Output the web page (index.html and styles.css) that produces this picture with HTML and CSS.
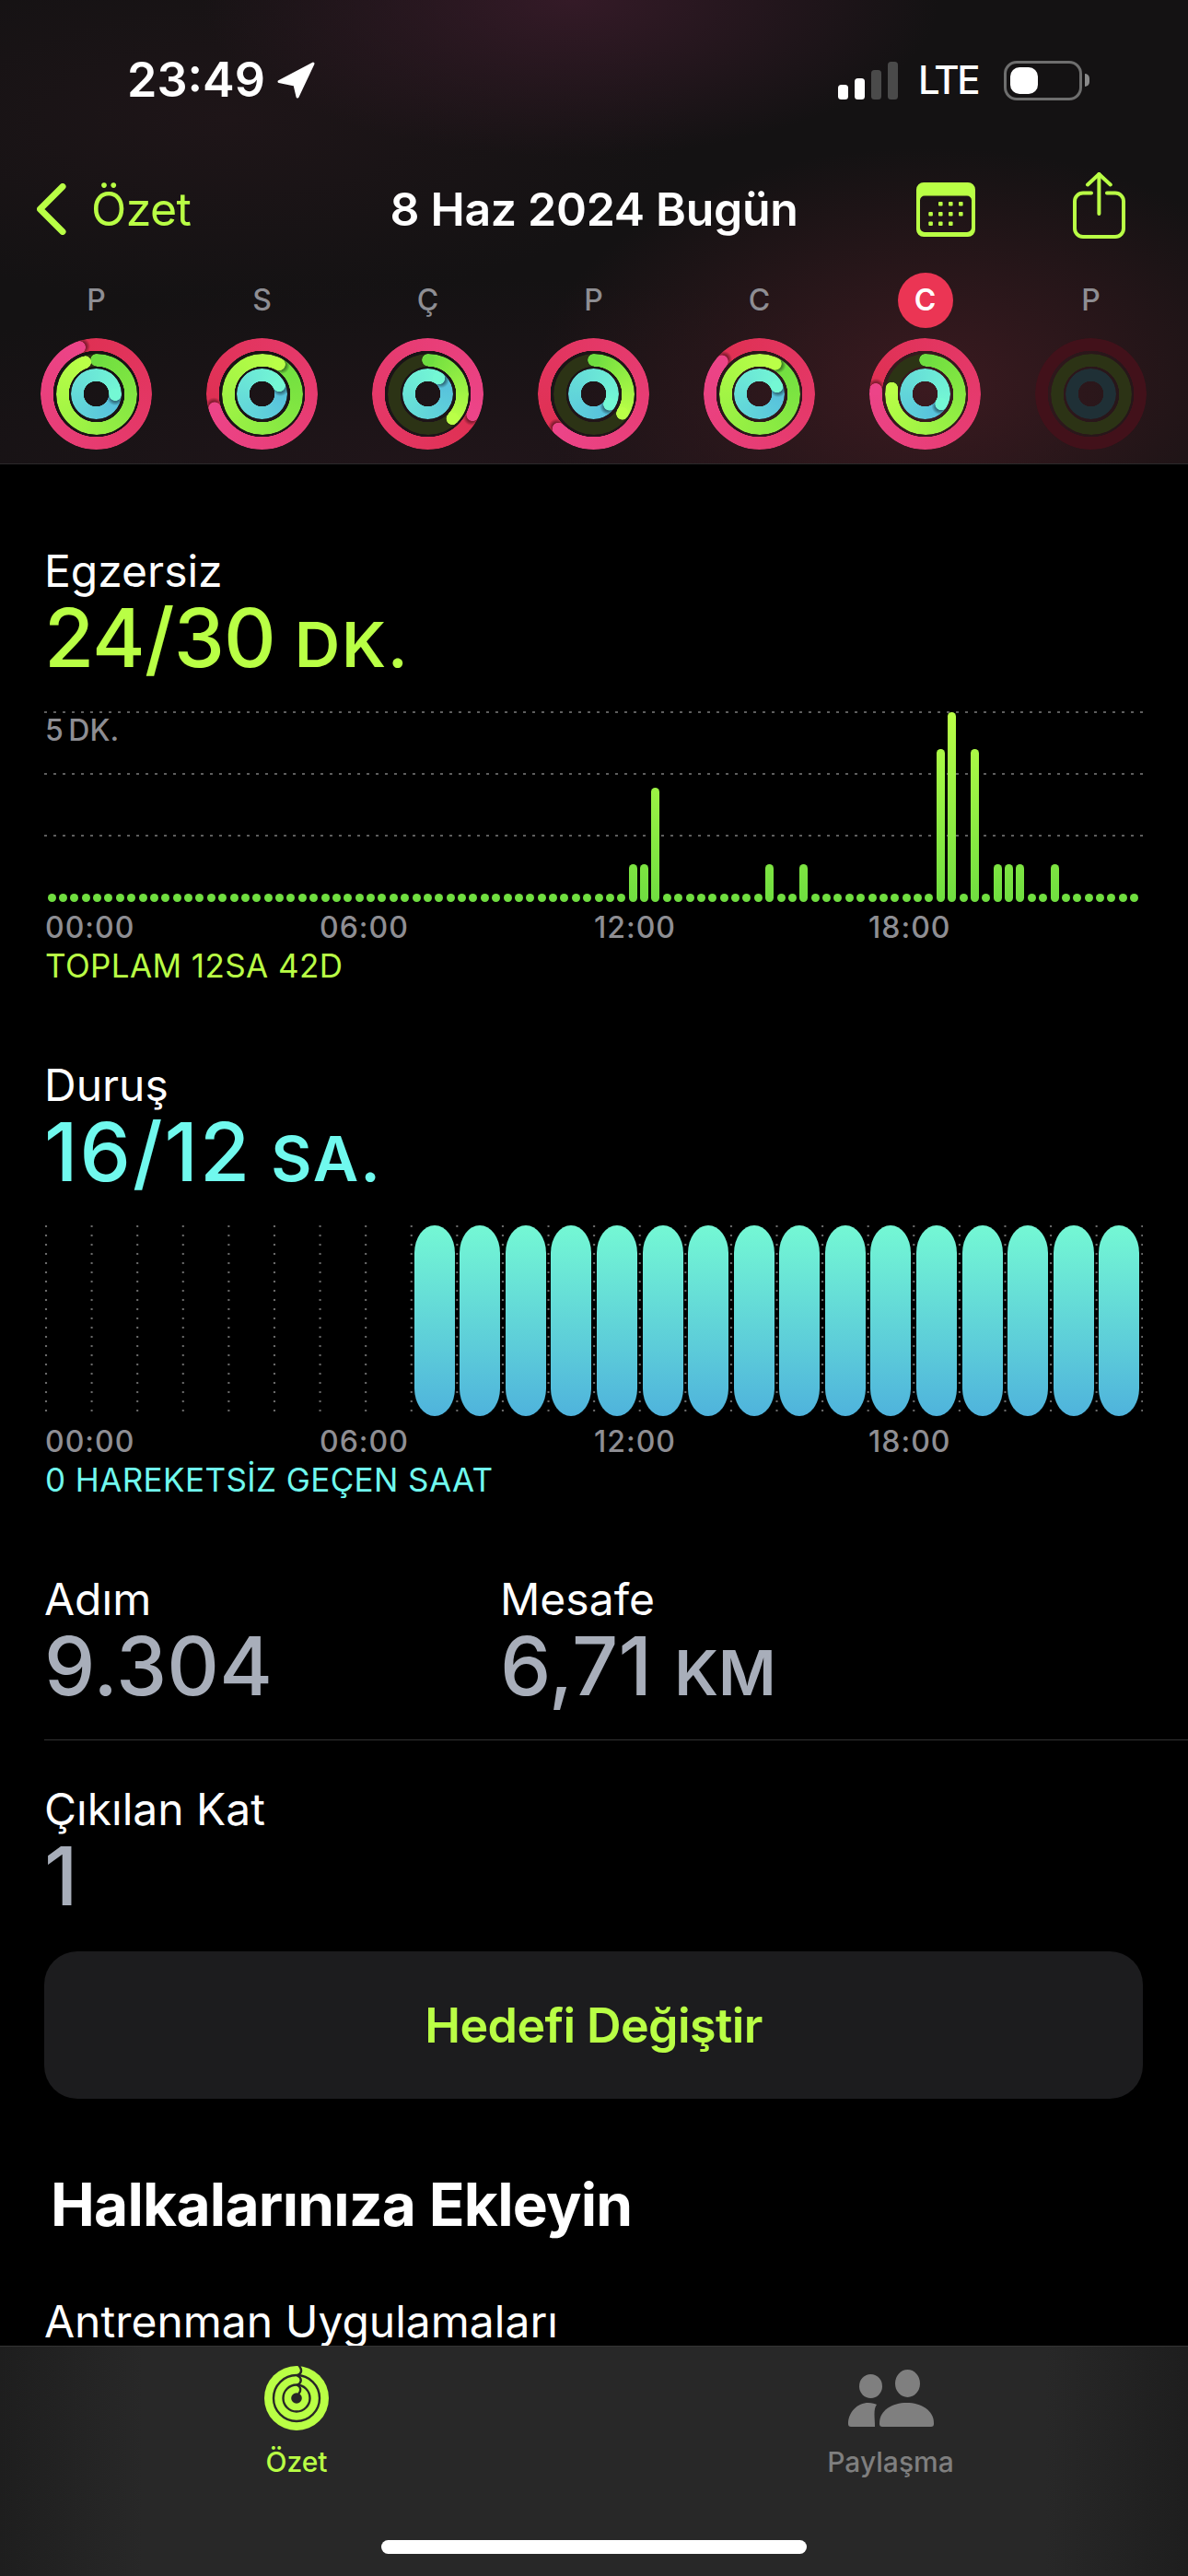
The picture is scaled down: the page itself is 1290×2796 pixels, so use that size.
FILE: index.html
```html
<!DOCTYPE html>
<html lang="tr">
<head>
    <meta charset="UTF-8">
    <meta name="viewport" content="width=device-width, initial-scale=1.0">
    <title>Özet</title>
    <link rel="stylesheet" href="styles.css">
</head>
<body>
<div class="screen">

    <header class="top">
        <div class="status">
            <div class="status-left">
                <span class="clock">23:49</span>
                <svg class="loc-arrow" viewBox="0 0 42 40"><path d="M40 2 L3 21.5 L20 25 L23 38 Z" fill="#fff" stroke="#fff" stroke-width="3" stroke-linejoin="round"/></svg>
            </div>
            <div class="status-right">
                <div class="signal">
                    <i class="sig s1"></i><i class="sig s2"></i><i class="sig s3"></i><i class="sig s4"></i>
                </div>
                <span class="lte">LTE</span>
                <div class="battery"><div class="battery-level"></div></div>
                <div class="battery-nub"></div>
            </div>
        </div>

        <nav class="nav">
            <div class="nav-back">
                <svg class="chevron" viewBox="0 0 32 56"><path d="M28 3.5 L3.5 28 L28 52.5" fill="none" stroke="#b9ff45" stroke-width="7" stroke-linecap="round" stroke-linejoin="round"/></svg>
                <span>Özet</span>
            </div>
            <div class="nav-title">8 Haz 2024 Bugün</div>
            <div class="nav-actions">
                <svg class="cal-icon" viewBox="0 0 64 59">
                    <path fill-rule="evenodd" fill="#b9ff45" d="M8 0 H56 a8 8 0 0 1 8 8 V51 a8 8 0 0 1 -8 8 H8 a8 8 0 0 1 -8 -8 V8 a8 8 0 0 1 8 -8 Z M9 14.5 a5 5 0 0 0 -5 5 V49 a5 5 0 0 0 5 5 H55 a5 5 0 0 0 5 -5 V19.5 a5 5 0 0 0 -5 -5 Z"/>
                    <g fill="#b9ff45">
                        <rect x="24" y="21" width="4.6" height="4.6" rx="1"/><rect x="35" y="21" width="4.6" height="4.6" rx="1"/><rect x="46" y="21" width="4.6" height="4.6" rx="1"/>
                        <rect x="13.3" y="32" width="4.6" height="4.6" rx="1"/><rect x="24" y="32" width="4.6" height="4.6" rx="1"/><rect x="35" y="32" width="4.6" height="4.6" rx="1"/><rect x="46" y="32" width="4.6" height="4.6" rx="1"/>
                        <rect x="13.3" y="42.5" width="4.6" height="4.6" rx="1"/><rect x="24" y="42.5" width="4.6" height="4.6" rx="1"/><rect x="35" y="42.5" width="4.6" height="4.6" rx="1"/>
                    </g>
                </svg>
                <svg class="share-icon" viewBox="0 0 57 72">
                    <g fill="none" stroke="#b9ff45" stroke-width="4" stroke-linecap="round" stroke-linejoin="round">
                        <path d="M20 22.5 H11 a9 9 0 0 0 -9 9 V61 a9 9 0 0 0 9 9 H46 a9 9 0 0 0 9 -9 V31.5 a9 9 0 0 0 -9 -9 H37"/>
                        <path d="M28.4 2 V45"/>
                        <path d="M16 13.5 L28.4 2 L40.8 13.5"/>
                    </g>
                </svg>
            </div>
        </nav>

        <div class="week">
            <div class="day">
                <div class="day-label">P</div>
                <div class="rings">
                    <div class="ring move" style="--end:340deg"></div>
                    <div class="ring exercise arc" style="--end:340deg"></div>
                    <div class="ring stand" style="--end:92deg"></div>
                </div>
            </div>
            <div class="day">
                <div class="day-label">S</div>
                <div class="rings">
                    <div class="ring move" style="--end:253deg"></div>
                    <div class="ring exercise" style="--end:29deg"></div>
                    <div class="ring stand" style="--end:64deg"></div>
                </div>
            </div>
            <div class="day">
                <div class="day-label">Ç</div>
                <div class="rings">
                    <div class="ring move" style="--end:115deg"></div>
                    <div class="ring exercise arc" style="--end:135deg"></div>
                    <div class="ring stand" style="--end:35deg"></div>
                </div>
            </div>
            <div class="day">
                <div class="day-label">P</div>
                <div class="rings">
                    <div class="ring move" style="--end:225deg"></div>
                    <div class="ring exercise arc" style="--end:124deg"></div>
                    <div class="ring stand" style="--end:123deg"></div>
                </div>
            </div>
            <div class="day">
                <div class="day-label">C</div>
                <div class="rings">
                    <div class="ring move" style="--end:311deg"></div>
                    <div class="ring exercise" style="--end:27deg"></div>
                    <div class="ring stand" style="--end:67deg"></div>
                </div>
            </div>
            <div class="day">
                <div class="day-label today">C</div>
                <div class="rings">
                    <div class="ring move" style="--end:275deg"></div>
                    <div class="ring exercise arc" style="--end:280deg"></div>
                    <div class="ring stand" style="--end:122deg"></div>
                </div>
            </div>
            <div class="day">
                <div class="day-label">P</div>
                <div class="rings">
                    <div class="ring move empty"></div>
                    <div class="ring exercise empty"></div>
                    <div class="ring stand empty"></div>
                </div>
            </div>
        </div>
    </header>

    <main class="content">
        <section class="section first">
            <div class="label">Egzersiz</div>
            <div class="value green">24/30<span class="unit">DK.</span></div>
            <div class="chart exercise-chart">
                <span class="chart-max">5 DK.</span>
                <i class="bar"></i><i class="bar"></i><i class="bar"></i><i class="bar"></i><i class="bar"></i><i class="bar"></i><i class="bar"></i><i class="bar"></i><i class="bar"></i><i class="bar"></i><i class="bar"></i><i class="bar"></i>
                <i class="bar"></i><i class="bar"></i><i class="bar"></i><i class="bar"></i><i class="bar"></i><i class="bar"></i><i class="bar"></i><i class="bar"></i><i class="bar"></i><i class="bar"></i><i class="bar"></i><i class="bar"></i>
                <i class="bar"></i><i class="bar"></i><i class="bar"></i><i class="bar"></i><i class="bar"></i><i class="bar"></i><i class="bar"></i><i class="bar"></i><i class="bar"></i><i class="bar"></i><i class="bar"></i><i class="bar"></i>
                <i class="bar"></i><i class="bar"></i><i class="bar"></i><i class="bar"></i><i class="bar"></i><i class="bar"></i><i class="bar"></i><i class="bar"></i><i class="bar"></i><i class="bar"></i><i class="bar"></i><i class="bar"></i>
                <i class="bar"></i><i class="bar"></i><i class="bar"></i><i class="bar v1"></i><i class="bar v1"></i><i class="bar v3"></i><i class="bar"></i><i class="bar"></i><i class="bar"></i><i class="bar"></i><i class="bar"></i><i class="bar"></i>
                <i class="bar"></i><i class="bar"></i><i class="bar"></i><i class="bar v1"></i><i class="bar"></i><i class="bar"></i><i class="bar v1"></i><i class="bar"></i><i class="bar"></i><i class="bar"></i><i class="bar"></i><i class="bar"></i>
                <i class="bar"></i><i class="bar"></i><i class="bar"></i><i class="bar"></i><i class="bar"></i><i class="bar"></i><i class="bar v4"></i><i class="bar v5"></i><i class="bar"></i><i class="bar v4"></i><i class="bar"></i><i class="bar v1"></i>
                <i class="bar v1"></i><i class="bar v1"></i><i class="bar"></i><i class="bar"></i><i class="bar v1"></i><i class="bar"></i><i class="bar"></i><i class="bar"></i><i class="bar"></i><i class="bar"></i><i class="bar"></i><i class="bar"></i>
            </div>
            <div class="axis"><span>00:00</span><span>06:00</span><span>12:00</span><span>18:00</span></div>
            <div class="note green">TOPLAM 12SA 42D</div>
        </section>

        <section class="section">
            <div class="label">Duruş</div>
            <div class="value cyan">16/12<span class="unit">SA.</span></div>
            <div class="chart stand-chart">
                <i class="hour from-eight"></i><i class="hour"></i><i class="hour"></i><i class="hour"></i>
                <i class="hour"></i><i class="hour"></i><i class="hour"></i><i class="hour"></i>
                <i class="hour"></i><i class="hour"></i><i class="hour"></i><i class="hour"></i>
                <i class="hour"></i><i class="hour"></i><i class="hour"></i><i class="hour"></i>
            </div>
            <div class="axis"><span>00:00</span><span>06:00</span><span>12:00</span><span>18:00</span></div>
            <div class="note cyan">0 HAREKETSİZ GEÇEN SAAT</div>
        </section>

        <section class="section stats">
            <div>
                <div class="label">Adım</div>
                <div class="value grey">9.304</div>
            </div>
            <div>
                <div class="label">Mesafe</div>
                <div class="value grey">6,71<span class="unit tight">KM</span></div>
            </div>
        </section>

        <div class="divider"></div>

        <section class="floors">
            <div class="label">Çıkılan Kat</div>
            <div class="value grey">1</div>
        </section>

        <div class="goal-btn">Hedefi Değiştir</div>

        <h2 class="add-title">Halkalarınıza Ekleyin</h2>
        <div class="label workouts">Antrenman Uygulamaları</div>
    </main>

    <footer class="tabbar">
        <div class="tab active">
            <svg class="tab-icon" viewBox="0 0 70 70">
                <circle cx="35" cy="35" r="35" fill="#b9ff45"/>
                <g fill="none" stroke="#272727" stroke-width="2.4" stroke-linecap="round">
                    <circle cx="35" cy="35" r="25"/>
                    <circle cx="35" cy="35" r="14.5"/>
                    <path d="M38 0 C41 4 41 8 36 10"/>
                    <path d="M36 10.5 C41 13 41 18 36 20.5"/>
                    <path d="M36 21 C40 23 40 27 37.5 30"/>
                </g>
                <circle cx="35" cy="35" r="5.8" fill="#272727"/>
            </svg>
            <span>Özet</span>
        </div>
        <div class="tab">
            <svg class="tab-icon people" viewBox="0 0 93 62" fill="#7f7f7f">
                <ellipse cx="24.5" cy="18" rx="12.5" ry="13"/>
                <ellipse cx="64.5" cy="15" rx="13.5" ry="15"/>
                <path d="M34 58 C34 44 48 36 63.5 36 C79 36 93 44 93 58 V59 Q93 62 90 62 H37 Q34 62 34 59 Z"/>
                <path d="M0 59 C0 46 10 36 22 36 C26 36 29 37 31 38 C27 43 29 52 29 62 H3 Q0 62 0 59 Z"/>
            </svg>
            <span>Paylaşma</span>
        </div>
        <div class="home-bar"></div>
    </footer>

</div>
</body>
</html>
```

FILE: styles.css
```css
* {
    box-sizing: border-box;
}
body {
    margin: 0;
    background: #000;
    color: #fff;
    font-family: Inter, 'Liberation Sans', sans-serif;
}
.screen {
    width: 1290px;
    height: 2796px;
    display: flex;
    flex-direction: column;
    overflow: hidden;
}

/* header */
.top {
    height: 504px;
    flex: none;
    border-bottom: 1px solid #2b2a2b;
    padding-top: 62px;
    background:
        radial-gradient(ellipse 400px 170px at 620px 0, #341a27, transparent),
        radial-gradient(ellipse 430px 260px at 1010px 420px, #3b1a20, transparent),
        radial-gradient(ellipse 700px 220px at 480px 520px, #21151a, transparent),
        radial-gradient(ellipse 500px 200px at 250px 130px, #1e1518, transparent),
        #141213;
}
.status {
    height: 50px;
    display: flex;
    justify-content: space-between;
    align-items: center;
    padding: 0 107px 0 138px;
}
.status-left, .status-right {
    display: flex;
    align-items: center;
}
.clock {
    font-size: 52px;
    line-height: 50px;
    font-weight: 600;
    letter-spacing: 0;
}
.loc-arrow {
    width: 42px;
    height: 40px;
    margin-left: 12px;
}
.signal {
    display: flex;
    align-items: flex-end;
    gap: 7px;
    height: 41px;
}
.sig {
    width: 11px;
    border-radius: 3.5px;
    background: #fff;
}
.s1 { height: 16px; }
.s2 { height: 23px; }
.s3 { height: 32px; background: #4a4a4a; }
.s4 { height: 41px; background: #4a4a4a; }
.lte {
    font-size: 42px;
    line-height: 50px;
    font-weight: 500;
    margin-left: 22px;
    letter-spacing: -2.5px;
}
.battery {
    width: 85px;
    height: 43px;
    margin-left: 28px;
    padding: 4px;
    border: 3px solid #6e6e6e;
    border-radius: 14px;
}
.battery-level {
    width: 30px;
    height: 29px;
    border-radius: 10px;
    background: #fff;
}
.battery-nub {
    width: 5px;
    height: 14px;
    margin-left: 3px;
    border-radius: 0 5px 5px 0;
    background: #8a8a8a;
}

.nav {
    height: 80px;
    margin-top: 75px;
    padding: 0 40px;
    display: grid;
    grid-template-columns: 1fr auto 1fr;
    align-items: center;
}
.nav-back {
    display: flex;
    align-items: center;
    gap: 27px;
    color: #b9ff45;
    font-size: 50px;
    letter-spacing: -0.6px;
}
.chevron {
    width: 32px;
    height: 56px;
}
.nav-title {
    font-size: 50px;
    font-weight: 600;
    letter-spacing: -0.3px;
}
.nav-actions {
    display: flex;
    justify-content: flex-end;
    align-items: center;
    gap: 106px;
    padding-right: 28px;
}
.cal-icon {
    width: 64px;
    height: 59px;
}
.share-icon {
    width: 57px;
    height: 72px;
    margin-top: -8px;
}

.week {
    margin-top: 29px;
    padding: 0 14.5px;
    display: grid;
    grid-template-columns: repeat(7, 180px);
}
.day {
    display: flex;
    flex-direction: column;
    align-items: center;
}
.day-label {
    width: 60px;
    height: 60px;
    border-radius: 50%;
    text-align: center;
    font-size: 32px;
    line-height: 60px;
    font-weight: 500;
    color: #8e8e93;
}
.day-label.today {
    background: #eb3554;
    color: #fff;
    font-weight: 600;
}

/* activity rings, --end is where the head of the ring sits */
.rings {
    width: 121px;
    height: 121px;
    margin-top: 11px;
    display: grid;
    place-items: center;
}
.ring {
    grid-area: 1 / 1;
    position: relative;
    border-radius: 50%;
}
.ring.move {
    width: 121px;
    height: 121px;
    --c1: #df3052;
    --c2: #ec4488;
    --track: #42111a;
}
.ring.exercise {
    width: 88px;
    height: 88px;
    --c1: #6fde40;
    --c2: #baff47;
    --track: #2c3315;
}
.ring.stand {
    width: 55px;
    height: 55px;
    --c1: #55bddd;
    --c2: #74f8d4;
    --track: #1f3036;
}
.ring::before, .ring::after {
    content: "";
    position: absolute;
    inset: 0;
    border-radius: 50%;
    -webkit-mask: radial-gradient(closest-side, transparent calc(100% - 14px), #000 calc(100% - 13.5px));
    mask: radial-gradient(closest-side, transparent calc(100% - 14px), #000 calc(100% - 13.5px));
}
.ring::before {
    background: conic-gradient(from var(--end), var(--c1), var(--c2));
}
.ring.arc::before {
    background:
        radial-gradient(circle at 50% 6.75px, var(--c1) 6.4px, transparent 7px),
        conic-gradient(var(--c1) 0deg, var(--c2) var(--end), var(--track) var(--end));
}
.ring::after {
    transform: rotate(var(--end));
    background:
        radial-gradient(circle at 50% 6.75px, var(--c2) 6.4px, transparent 7px),
        radial-gradient(circle at calc(50% + 3px) 6.75px, rgba(0, 0, 0, 0.4) 5px, transparent 9px);
}
.ring.arc::after {
    background: radial-gradient(circle at 50% 6.75px, var(--c2) 6.4px, transparent 7px);
}
.ring.empty::before {
    background: var(--track);
}
.ring.empty::after {
    display: none;
}

/* main scroll area */
.content {
    flex: 1;
    min-height: 0;
    overflow: hidden;
    padding: 0 49px 0 48px;
}
.section {
    margin-top: 83px;
}
.section.first {
    margin-top: 88px;
}
.label {
    font-size: 48px;
    line-height: 56px;
    letter-spacing: 0;
}
.value {
    margin-top: 6px;
    font-size: 88px;
    line-height: 76px;
    font-weight: 500;
    letter-spacing: -0.8px;
}
.unit {
    font-size: 68px;
    line-height: 0;
    font-weight: 600;
    margin-left: 21px;
    letter-spacing: 2px;
}
.unit.tight {
    margin-left: 24px;
    letter-spacing: 0;
}
.green { color: #b9ff45; }
.cyan {
    color: #70f9ee;
}
.value.cyan {
    letter-spacing: 2px;
}
.value.grey {
    color: #a8aeba;
    font-weight: 450;
    letter-spacing: 0.2px;
}

.chart {
    height: 207px;
    margin-top: 42px;
}
.exercise-chart {
    position: relative;
    display: flex;
    justify-content: space-between;
    align-items: flex-end;
    padding: 0 3.5px;
    background-image:
        repeating-linear-gradient(to right, #5e5e5e 0 3px, transparent 3px 10px),
        repeating-linear-gradient(to right, #5e5e5e 0 3px, transparent 3px 10px),
        repeating-linear-gradient(to right, #5e5e5e 0 3px, transparent 3px 10px);
    background-size: 100% 2px;
    background-repeat: no-repeat;
    background-position: 0 0, 0 67px, 0 134px;
}
.chart-max {
    position: absolute;
    left: 1px;
    top: 3px;
    font-size: 32px;
    line-height: 36px;
    font-weight: 500;
    color: #8e8e93;
    word-spacing: -3px;
}
.bar {
    width: 9px;
    height: 9px;
    border-radius: 5px;
    background: linear-gradient(to top, #6fde40, #baff47) bottom / 100% 206px no-repeat;
}
.bar.v1 { height: 41px; }
.bar.v3 { height: 124px; }
.bar.v4 { height: 166px; }
.bar.v5 { height: 206px; }

.stand-chart {
    display: grid;
    grid-template-columns: repeat(24, 49.6px);
    padding-left: 2px;
    background-image: radial-gradient(circle, #6a6a6a 1px, transparent 1.6px);
    background-size: 49.6px 10px;
    background-position: -22.8px -4px;
    background-repeat: repeat;
}
.hour {
    margin: 0 2.8px;
    border-radius: 22px / 30px;
    background: linear-gradient(to bottom, #74f8d4, #4fb3dc);
}
.hour.from-eight {
    grid-column-start: 9;
}

.axis {
    margin-top: 10px;
    display: grid;
    grid-template-columns: repeat(4, 298px);
    font-size: 32px;
    line-height: 36px;
    font-weight: 500;
    color: #8e8e93;
    letter-spacing: 1px;
    padding-left: 1px;
}
.note {
    margin-top: 4px;
    padding-left: 1px;
    font-size: 35px;
    line-height: 38px;
    letter-spacing: 0.4px;
}

.stats {
    display: grid;
    grid-template-columns: 495px 1fr;
}
.divider {
    height: 1px;
    margin: 42px -49px 0 0;
    background: #333;
}
.floors {
    margin-top: 47px;
}
.goal-btn {
    height: 160px;
    margin-top: 44px;
    border-radius: 36px;
    background: #1c1c1e;
    color: #b9ff45;
    font-size: 52px;
    font-weight: 600;
    letter-spacing: -0.6px;
    display: flex;
    align-items: center;
    justify-content: center;
}
.add-title {
    margin: 79px 0 0 7px;
    font-size: 64px;
    line-height: 72px;
    font-weight: 700;
    letter-spacing: -0.75px;
}
.workouts {
    margin-top: 63px;
}

/* bottom tabs */
.tabbar {
    height: 250px;
    flex: none;
    border-top: 1px solid #343434;
    background: linear-gradient(to right, #1e1e1e, #282828 12%, #282828 88%, #1e1e1e);
    display: grid;
    grid-template-columns: 644px 646px;
    grid-template-rows: 1fr 39px;
}
.tab {
    display: flex;
    flex-direction: column;
    align-items: center;
    color: #7f7f7f;
    font-size: 30px;
    font-weight: 500;
    line-height: 38px;
    padding-top: 21px;
}
.tab.active {
    color: #b9ff45;
}
.tab span {
    margin-top: 15px;
}
.tab-icon {
    width: 70px;
    height: 70px;
}
.tab-icon.people {
    width: 93px;
    height: 62px;
    margin-top: 4px;
    margin-bottom: 4px;
}
.home-bar {
    grid-column: 1 / -1;
    justify-self: center;
    width: 462px;
    height: 15px;
    border-radius: 8px;
    background: #fff;
}
```
